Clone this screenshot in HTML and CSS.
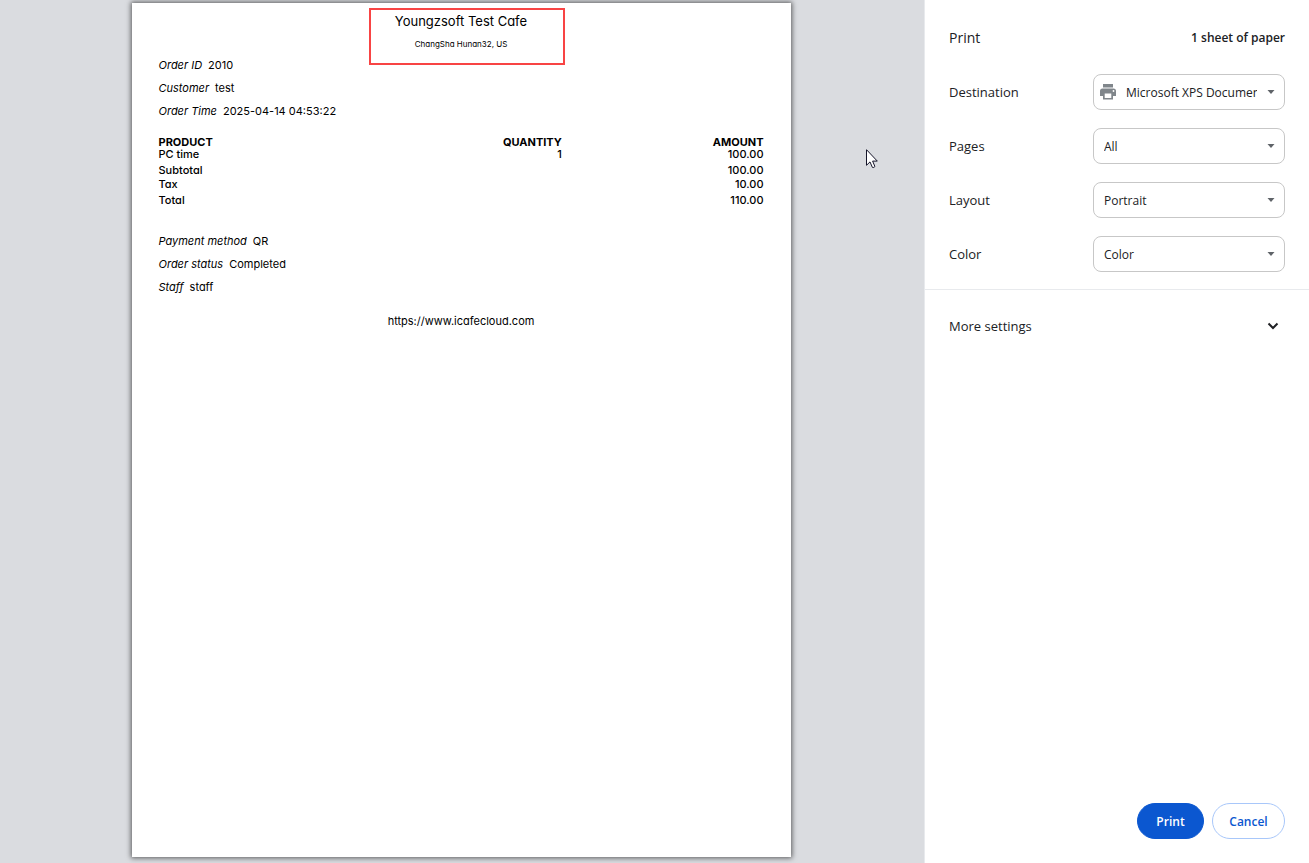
FILE: index.html
```html
<!DOCTYPE html>
<html lang="en">
<head>
<meta charset="utf-8">
<title>Print</title>
<link rel="stylesheet" href="styles.css">
</head>
<body>
<div class="dialog">
  <main class="preview">
    <article class="paper">
      <header class="shop">
        <h1 class="shop-name">Youngzsoft Test Cafe</h1>
        <p class="shop-address">ChangSha Hunan32, US</p>
        <div class="highlight"></div>
      </header>
      <dl class="facts">
        <div class="fact"><dt>Order ID</dt><dd>2010</dd></div>
        <div class="fact"><dt>Customer</dt><dd>test</dd></div>
        <div class="fact"><dt>Order Time</dt><dd>2025-04-14 04:53:22</dd></div>
      </dl>
      <table class="items">
        <thead>
          <tr><th>PRODUCT</th><th>QUANTITY</th><th>AMOUNT</th></tr>
        </thead>
        <tbody>
          <tr><td>PC time</td><td>1</td><td>100.00</td></tr>
          <tr class="spaced"><td>Subtotal</td><td></td><td>100.00</td></tr>
          <tr><td>Tax</td><td></td><td>10.00</td></tr>
          <tr class="spaced"><td>Total</td><td></td><td>110.00</td></tr>
        </tbody>
      </table>
      <dl class="facts">
        <div class="fact"><dt>Payment method</dt><dd>QR</dd></div>
        <div class="fact"><dt>Order status</dt><dd>Completed</dd></div>
        <div class="fact"><dt>Staff</dt><dd>staff</dd></div>
      </dl>
      <p class="site">https://www.icafecloud.com</p>
    </article>
    <svg class="cursor" width="12" height="20" viewBox="0 0 12 20" aria-hidden="true">
      <path d="M.5 .7V16.3L4 12.9L6.4 18.4Q8 19 8.9 17.5L6.600 12.100H11.300Z" fill="#fff" stroke="#15152a" stroke-width="1"/>
    </svg>
  </main>
  <aside class="sidebar">
    <header class="sidebar-head">
      <h2 class="title">Print</h2>
      <span class="sheets">1 sheet of paper</span>
    </header>
    <form class="settings">
      <div class="row">
        <label for="destination">Destination</label>
        <div class="picker">
          <svg class="printer" width="18" height="18" viewBox="0 0 18 18" aria-hidden="true">
            <path d="M4 1H14V4.500H4ZM3.500 5.500H14.500A2.500 2.500 0 0 1 17 8V13H14V16.500H4V13H1V8A2.500 2.500 0 0 1 3.500 5.500ZM5.700 10.500V15H12.300V10.500Z" fill="#80868b" fill-rule="evenodd"/>
            <circle cx="14.500" cy="8" r=".9" fill="#fff"/>
          </svg>
          <select id="destination" class="select with-icon"><option>Microsoft XPS Document Writer</option></select>
          <svg class="arrow" width="8" height="4" viewBox="0 0 8 4" aria-hidden="true"><path d="M.5 0H7.500L4 4Z" fill="#5f6368"/></svg>
        </div>
      </div>
      <div class="row">
        <label for="pages">Pages</label>
        <div class="picker">
          <select id="pages" class="select"><option>All</option></select>
          <svg class="arrow" width="8" height="4" viewBox="0 0 8 4" aria-hidden="true"><path d="M.5 0H7.500L4 4Z" fill="#5f6368"/></svg>
        </div>
      </div>
      <div class="row">
        <label for="layout">Layout</label>
        <div class="picker">
          <select id="layout" class="select"><option>Portrait</option></select>
          <svg class="arrow" width="8" height="4" viewBox="0 0 8 4" aria-hidden="true"><path d="M.5 0H7.500L4 4Z" fill="#5f6368"/></svg>
        </div>
      </div>
      <div class="row">
        <label for="color">Color</label>
        <div class="picker">
          <select id="color" class="select"><option>Color</option></select>
          <svg class="arrow" width="8" height="4" viewBox="0 0 8 4" aria-hidden="true"><path d="M.5 0H7.500L4 4Z" fill="#5f6368"/></svg>
        </div>
      </div>
    </form>
    <button class="more" type="button">
      <span>More settings</span>
      <svg width="12" height="8" viewBox="0 0 12 8" aria-hidden="true"><path d="M1.500 1.500L6 6L10.500 1.500" fill="none" stroke="#202124" stroke-width="2"/></svg>
    </button>
    <footer class="actions">
      <button class="button primary" type="button">Print</button>
      <button class="button" type="button">Cancel</button>
    </footer>
  </aside>
</div>
</body>
</html>
```

FILE: styles.css
```css
* {
  box-sizing: border-box;
}

body,
h1,
h2,
p,
dl,
dd {
  margin: 0;
}

body {
  font-family: "Open Sans", "Noto Sans", sans-serif;
  font-size: 13px;
  color: #202124;
}

.dialog {
  display: flex;
  height: 100vh;
}

.preview {
  position: relative;
  flex: 1;
  display: flex;
  justify-content: center;
  padding: 3px 2px 6px 0;
  background: #dadce0;
  overflow: hidden;
}

.paper {
  aspect-ratio: 659 / 854;
  padding: 5px 27px 0;
  background: #fff;
  box-shadow: 0 0 5px 1px rgba(0, 0, 0, 0.6);
  font-family: Inter, sans-serif;
  font-feature-settings: "cv11";
  font-size: 11px;
  line-height: 15px;
  color: #000;
}

.shop {
  position: relative;
  height: 50px;
  padding-top: 2px;
  text-align: center;
}

.shop-name {
  font-size: 13px;
  font-weight: 400;
  line-height: 22px;
}

.shop-address {
  padding-top: 4px;
  font-size: 8px;
  line-height: 16px;
}

.highlight {
  position: absolute;
  top: 0;
  left: calc(50% - 92px);
  width: 196px;
  height: 57px;
  border: 2px solid #f84444;
}

.facts {
  display: grid;
  gap: 8px;
}

.fact {
  display: flex;
  gap: 6px;
}

.fact dt {
  font-style: italic;
}

.items {
  width: 100%;
  margin: 17px 0 26px;
  border-collapse: collapse;
  table-layout: fixed;
  line-height: 12px;
}

.items th,
.items td {
  padding: 0;
  text-align: right;
  font-weight: 500;
}

.items th {
  font-weight: 700;
}

.items th:first-child,
.items td:first-child {
  text-align: left;
}

.items .spaced td {
  padding: 4px 0 2px;
}

.site {
  padding-top: 19px;
  text-align: center;
}

.cursor {
  position: absolute;
  left: 866px;
  top: 149px;
}

.sidebar {
  flex: none;
  display: flex;
  flex-direction: column;
  width: 385px;
  border-left: 1px solid #e8eaed;
  background: #fff;
}

.sidebar-head {
  display: flex;
  align-items: center;
  justify-content: space-between;
  height: 74px;
  padding: 0 24px;
}

.title {
  font-size: 14px;
  font-weight: 400;
}

.sheets {
  font-size: 12px;
  font-weight: 600;
}

.settings {
  display: grid;
  gap: 18px;
  padding: 0 24px 17px;
  border-bottom: 1px solid #e8eaed;
}

.row {
  display: flex;
  align-items: center;
  justify-content: space-between;
}

.picker {
  position: relative;
  width: 192px;
}

.select {
  display: block;
  width: 100%;
  height: 36px;
  padding: 0 32px 0 10px;
  border: 1px solid #c7c7c7;
  border-radius: 8px;
  appearance: none;
  background: #fff;
  color: inherit;
  font-family: inherit;
  font-size: 12px;
}

.with-icon {
  padding-right: 27px;
  padding-left: 32px;
}

.printer {
  position: absolute;
  left: 6px;
  top: 9px;
}

.arrow {
  position: absolute;
  right: 10px;
  top: 16px;
}

.more {
  display: flex;
  align-items: center;
  justify-content: space-between;
  height: 72px;
  padding: 0 30px 0 24px;
  border: 0;
  background: none;
  color: inherit;
  font: inherit;
}

.actions {
  display: flex;
  justify-content: flex-end;
  gap: 8px;
  margin-top: auto;
  padding: 24px;
}

.button {
  height: 36px;
  min-width: 73px;
  padding: 0 16px;
  border: 1px solid #a8c7fa;
  border-radius: 18px;
  background: #fff;
  color: #0b57d0;
  font-family: inherit;
  font-size: 12px;
  font-weight: 600;
}

.primary {
  min-width: 67px;
  border-color: #0b57d0;
  background: #0b57d0;
  color: #fff;
}
```
